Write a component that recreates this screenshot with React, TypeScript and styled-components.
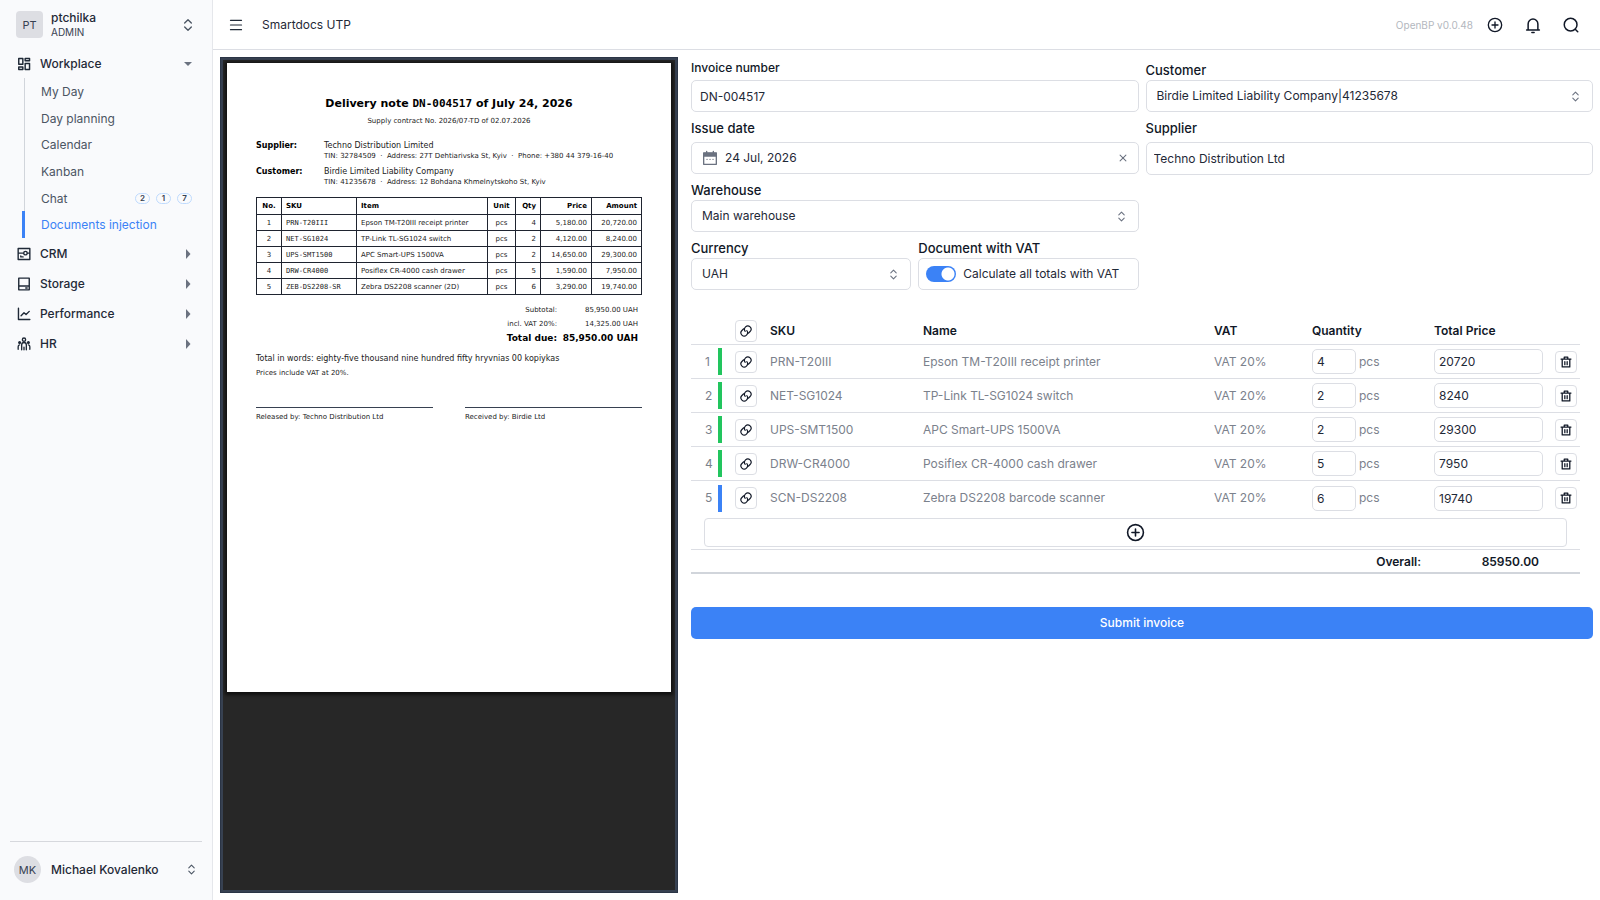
import React from "react";
import styled, { createGlobalStyle } from "styled-components";

const GlobalStyle = createGlobalStyle`
  *, *::before, *::after { box-sizing: border-box; }
  body { margin: 0; background: #fff; color: #1f2937; font-family: Inter, "Liberation Sans", sans-serif; font-size: 12px; line-height: 16px; }
  button, input, select { font: inherit; color: inherit; margin: 0; }
  button { background: none; border: 0; padding: 0; cursor: pointer; }
  ul { list-style: none; margin: 0; padding: 0; }
  a { color: inherit; text-decoration: none; }
  h1, p, dl, dd { margin: 0; }
`;

/* ---------- icons ---------- */

const Svg = styled.svg.attrs({ viewBox: "0 0 24 24", "aria-hidden": true })<{ $size: number; $stroke?: number }>`
  display: block;
  flex: none;
  width: ${(p) => p.$size}px;
  height: ${(p) => p.$size}px;
  fill: none;
  stroke: currentColor;
  stroke-width: ${(p) => p.$stroke ?? 2};
  stroke-linecap: round;
  stroke-linejoin: round;
`;

const SortIcon = ({ size = 13 }: { size?: number }) => (
  <Svg $size={size}><path d="m7 15 5 5 5-5M7 9l5-5 5 5" /></Svg>
);
const LinkIcon = () => (
  <Svg $size={14} $stroke={2}>
    <path d="M8 8.200 5 11.200a5.100 5.100 0 0 0 7.800 7.800c2.500-2.500 2.500-5.200.6-7.600" />
    <path d="m16 15.800 3-3a5.100 5.100 0 0 0-7.800-7.800c-2.500 2.500-2.500 5.200-.6 7.600" />
  </Svg>
);
const TrashIcon = () => (
  <Svg $size={14} $stroke={2.2}><path d="M3.500 7h17M10 11.500v5m4-5v5M9 7V3.500h6V7M5.500 7h13v13.500h-13V7Z" /></Svg>
);
const PlusCircleIcon = ({ size }: { size: number }) => (
  <Svg $size={size}><circle cx="12" cy="12" r="10" /><path d="M12 7.500v9M7.500 12h9" /></Svg>
);
const BellIcon = () => (
  <Svg $size={18}><path d="M3.500 18.500h17M5.500 18v-7.500a6.500 6.500 0 0 1 13 0V18M10.500 22h3" /></Svg>
);
const SearchIcon = () => (
  <Svg $size={18}><circle cx="11.500" cy="11.500" r="8.500" /><path d="m18 18 3 3" /></Svg>
);
const MenuIcon = () => (
  <Svg $size={14}><path d="M2.500 4h19M2.500 12h19M2.500 20h19" /></Svg>
);
const CloseIcon = () => (
  <Svg $size={10} $stroke={2.5}><path d="m5 5 14 14M19 5 5 19" /></Svg>
);
const CalendarIcon = () => (
  <Svg $size={16} $stroke={2}>
    <path d="M2.500 4.500h19v17h-19z" />
    <path d="M2.500 5h19v4h-19z" fill="currentColor" />
    <path d="M7 2v3M17 2v3M7.500 14h.1M12 14h.1M16.500 14h.1" />
  </Svg>
);
const WorkplaceIcon = () => (
  <Svg $size={14} $stroke={2.5}>
    <path d="M3 2.500h7v10H3zM14 2.500h7.500v4H14zM14 11h7.500v10.500H14zM3 17h7v4.500H3z" />
  </Svg>
);
const CrmIcon = () => (
  <Svg $size={14} $stroke={2.4}>
    <path d="M2 2.500h20v19H2zM2 10.500h9M18 10.500h4M6.500 15.500v1.500h4" /><circle cx="14.500" cy="10.500" r="3" />
  </Svg>
);
const StorageIcon = () => (
  <Svg $size={14} $stroke={2.4}>
    <path d="M3 2h18v20H3zM3 15.500h18M15 18.800h2.500" />
  </Svg>
);
const PerformanceIcon = () => (
  <Svg $size={14} $stroke={2.4}>
    <path d="M2.500 2v19.500H22M7 15l5-5 3.500 3L21 7.500" />
  </Svg>
);
const HrIcon = () => (
  <Svg $size={14} $stroke={2.3}>
    <circle cx="12" cy="4.500" r="2.800" />
    <circle cx="4.500" cy="9.500" r="1.500" fill="currentColor" />
    <circle cx="19.500" cy="9.500" r="1.500" fill="currentColor" />
    <path d="M8 22v-8.500a4 4 0 0 1 8 0V22M12 17.500v4.500M2 21v-4.500a3 3 0 0 1 2.500-3M22 21v-4.500a3 3 0 0 0-2.500-3" />
  </Svg>
);
const Caret = styled.svg.attrs({ viewBox: "0 0 8 10", "aria-hidden": true })<{ $open?: boolean }>`
  width: 8px;
  height: 10px;
  fill: #6b7280;
  transform: ${(p) => (p.$open ? "rotate(90deg)" : "none")};
`;

/* ---------- page shell ---------- */

const Shell = styled.div`
  display: flex;
  min-height: 100vh;
`;
const Sidebar = styled.nav`
  display: flex;
  flex-direction: column;
  flex: none;
  width: 213px;
  background: #f9fafc;
  border-right: 1px solid #e5e7eb;
`;
const AccountButton = styled.button`
  display: flex;
  align-items: center;
  gap: 8px;
  height: 48px;
  padding: 1px 16px 0;
  text-align: left;
  color: #4b5563;
`;
const Avatar = styled.span<{ $round?: boolean }>`
  display: grid;
  place-items: center;
  flex: none;
  width: 27px;
  height: 27px;
  border-radius: ${(p) => (p.$round ? "50%" : "4px")};
  background: #dddee3;
  font-size: 11px;
  color: #374151;
`;
const AccountText = styled.span`
  flex: 1;
  display: grid;
  font-size: 10px;
  line-height: 14px;
  color: #374151;
`;
const AccountName = styled.strong`
  flex: 1;
  font-size: 12px;
  font-weight: 500;
  color: #1f2937;
`;
const GroupButton = styled.button`
  display: flex;
  align-items: center;
  gap: 9px;
  width: 100%;
  height: 30px;
  padding: 1px 20px 0 17px;
  text-align: left;
  font-weight: 500;
  color: #1f2937;
`;
const Grow = styled.span`
  flex: 1;
`;
const SubList = styled.ul`
  display: flex;
  flex-direction: column;
  height: 160px;
  margin-left: 22px;
`;
const SubItem = styled.li`
  flex: 1;
  display: flex;
`;
const SubLink = styled.a<{ $active?: boolean }>`
  flex: 1;
  display: flex;
  align-items: center;
  justify-content: space-between;
  margin-left: ${(p) => (p.$active ? 0 : 2)}px;
  padding: 1px 20px 0 16px;
  border-left: ${(p) => (p.$active ? "3px solid #3b82f6" : "1px solid #d1d5db")};
  color: ${(p) => (p.$active ? "#3b82f6" : "#4b5563")};
`;
const Badges = styled.span`
  display: flex;
  gap: 6px;
`;
const Badge = styled.span`
  min-width: 15px;
  height: 11px;
  border: 1px solid #bfdbfe;
  border-radius: 6px;
  text-align: center;
  font-size: 8px;
  line-height: 9px;
  font-weight: 600;
  color: #374151;
`;
const UserArea = styled.div`
  margin: auto 10px 0;
  padding: 14px 0 17px;
  border-top: 1px solid #d6d8dd;
`;
const UserButton = styled.button`
  display: flex;
  align-items: center;
  gap: 10px;
  width: 100%;
  padding: 0 4px;
  text-align: left;
  color: #4b5563;
`;
const Main = styled.main`
  flex: 1;
  min-width: 0;
  display: flex;
  flex-direction: column;
`;
const TopBar = styled.header`
  display: flex;
  align-items: center;
  height: 50px;
  padding: 0 20px 0 16px;
  border-bottom: 1px solid #dcdee4;
`;
const TopTitle = styled.h1`
  flex: 1;
  margin-left: 19px;
  font-size: 12px;
  font-weight: 400;
`;
const Version = styled.span`
  margin-right: 13px;
  font-size: 10px;
  color: #b3b7be;
`;
const TopActions = styled.div`
  display: flex;
  gap: 20px;
  color: #111827;
`;
const TopButton = styled.button`
  display: grid;
  place-items: center;
  width: 18px;
  height: 18px;
`;
const Content = styled.div`
  flex: 1;
  display: grid;
  grid-template-columns: minmax(0, 458fr) minmax(0, 902fr);
  gap: 13px;
  padding: 7px;
`;

/* ---------- document preview ---------- */

const Viewer = styled.section`
  padding: 3px 4px;
  background: #272727;
  border: 3px solid #374151;
  outline: 1px solid #2b3546;
  outline-offset: -1px;
`;
const Paper = styled.article`
  height: 629px;
  padding: 32px 29px;
  background: #fff;
  box-shadow: 0 1px 3px 2px #111;
  color: #222;
  font-family: "DejaVu Sans", sans-serif;
  font-size: 7px;
  line-height: 10px;
`;
const PaperTitle = styled.h2`
  margin: 0;
  text-align: center;
  font-size: 11px;
  line-height: 18px;
  color: #000;
`;
const Mono = styled.span`
  font-family: "DejaVu Sans Mono", monospace;
`;
const Contract = styled.p`
  margin: 3px 0 15px;
  text-align: center;
`;
const Party = styled.dl`
  display: grid;
  grid-template-columns: 68px 1fr;
  margin: 0 0 6px;
`;
const PartyTerm = styled.dt`
  font-size: 8px;
  font-weight: 700;
  color: #000;
`;
const PartyName = styled.p`
  font-size: 8px;
`;
const PaperTable = styled.table`
  width: 100%;
  margin-top: 10px;
  table-layout: fixed;
  border-collapse: collapse;
`;
type Align = "left" | "center" | "right";
const PaperTh = styled.th<{ $align?: Align; $w?: number }>`
  width: ${(p) => (p.$w ? `${p.$w}px` : "auto")};
  height: 17px;
  padding: 0 4px;
  border: 1px solid #1f2430;
  text-align: ${(p) => p.$align ?? "left"};
  color: #000;
`;
const PaperTd = styled.td<{ $align?: Align }>`
  height: 16px;
  padding: 0 4px;
  border: 1px solid #1f2430;
  text-align: ${(p) => p.$align ?? "left"};
`;
const Totals = styled.dl`
  display: grid;
  grid-template-columns: 1fr 81px;
  margin: 8px 4px 7px 0;
  line-height: 14px;
  text-align: right;
`;
const TotalCell = styled.div<{ $strong?: boolean }>`
  font-size: ${(p) => (p.$strong ? 9 : 7)}px;
  font-weight: ${(p) => (p.$strong ? 700 : 400)};
  color: ${(p) => (p.$strong ? "#000" : "inherit")};
`;
const Note = styled.p<{ $large?: boolean }>`
  font-size: ${(p) => (p.$large ? 8 : 7)}px;
  line-height: 14px;
`;
const Signatures = styled.div`
  display: grid;
  grid-template-columns: 1fr 1fr;
  gap: 32px;
  margin-top: 27px;
`;
const Signature = styled.p`
  padding-top: 4px;
  border-top: 1px solid #374151;
`;

/* ---------- invoice form ---------- */

const Form = styled.form`
  min-width: 0;
`;
const Fields = styled.div`
  display: grid;
  grid-template-columns: 1fr 1fr;
  gap: 0 7px;
`;
const Column = styled.div`
  min-width: 0;
`;
const Split = styled.div`
  display: grid;
  grid-template-columns: 1fr 1fr;
  gap: 7px;
`;
const Field = styled.div<{ $top: number; $gap: number }>`
  padding-top: ${(p) => p.$top}px;
  > label:first-child, > span:first-child {
    display: block;
    margin-bottom: ${(p) => p.$gap}px;
  }
`;
const Label = styled.label<{ $small?: boolean }>`
  font-size: ${(p) => (p.$small ? 12 : 13)}px;
  line-height: 18px;
  font-weight: 500;
  color: #111827;
`;
const Control = styled.div<{ $pad?: number }>`
  display: flex;
  align-items: center;
  gap: 7px;
  height: 32px;
  padding: 0 ${(p) => p.$pad ?? 10}px;
  border: 1px solid #dcdee4;
  border-radius: 5px;
  color: #6b7280;
`;
const TextInput = styled.input<{ $h?: number; $pad?: number }>`
  display: block;
  width: 100%;
  height: ${(p) => p.$h ?? 32}px;
  padding: 0 ${(p) => p.$pad ?? 8}px;
  border: 1px solid #dcdee4;
  border-radius: 5px;
  background: #fff;
  color: #1f2937;
`;
const BareInput = styled.input`
  flex: 1;
  min-width: 0;
  padding: 0;
  border: 0;
  background: none;
  color: #1f2937;
`;
const SelectWrap = styled.div`
  display: grid;
  align-items: center;
  color: #6b7280;
  > * { grid-area: 1 / 1; }
  > svg { justify-self: end; margin-right: 11px; pointer-events: none; }
`;
const Select = styled.select`
  appearance: none;
  width: 100%;
  height: 32px;
  padding: 0 30px 0 10px;
  border: 1px solid #dcdee4;
  border-radius: 5px;
  background: #fff;
  color: #1f2937;
`;
const Toggle = styled.input.attrs({ type: "checkbox" })`
  appearance: none;
  flex: none;
  width: 30px;
  height: 16px;
  border-radius: 8px;
  background: radial-gradient(circle at 22px 8px, #fff 6px, #3b82f6 7px);
`;
const ToggleLabel = styled.label`
  color: #1f2937;
`;

/* ---------- lines table ---------- */

const Lines = styled.table`
  width: calc(100% - 13px);
  margin-top: 22px;
  table-layout: fixed;
  border-collapse: separate;
  border-spacing: 0;
`;
const Th = styled.th<{ $w?: number }>`
  width: ${(p) => (p.$w ? `${p.$w}px` : "auto")};
  height: 33px;
  padding: 6px 0 0;
  border-bottom: 1px solid #dcdee4;
  text-align: left;
  font-weight: 600;
  color: #111827;
`;
const LineRow = styled.tr`
  &:not(:last-child) > td { border-bottom: 1px solid #dcdee4; }
`;
const Td = styled.td`
  height: 34px;
  padding: 0;
  color: #7b818c;
`;
const IndexCell = styled.div<{ $tone: string }>`
  display: flex;
  align-items: center;
  height: 27px;
  width: 31px;
  padding-left: 14px;
  border-right: 4px solid ${(p) => p.$tone};
`;
const IconButton = styled.button`
  display: grid;
  place-items: center;
  width: 22px;
  height: 22px;
  border: 1px solid #dcdee4;
  border-radius: 4px;
  color: #111827;
`;
const Quantity = styled.div`
  display: grid;
  grid-template-columns: 44px 1fr;
  align-items: center;
  gap: 3px;
`;
const PriceBox = styled.div`
  width: 109px;
`;
const AddButton = styled.button`
  display: grid;
  place-items: center;
  width: calc(100% - 26px);
  height: 29px;
  margin: 0 13px;
  border: 1px solid #dcdee4;
  border-radius: 4px;
  color: #111827;
`;
const OverallCell = styled.td<{ $pad?: number }>`
  height: 25px;
  padding: 1px ${(p) => p.$pad ?? 0}px 0 0;
  border-top: 1px solid #dcdee4;
  border-bottom: 2px solid #d1d5db;
  text-align: right;
  font-weight: 600;
  color: #111827;
`;
const SubmitButton = styled.button`
  width: 100%;
  height: 32px;
  margin-top: 33px;
  border-radius: 5px;
  background: #3b82f6;
  color: #fff;
  font-weight: 500;
`;

/* ---------- data ---------- */

const subItems = ["My Day", "Day planning", "Calendar", "Kanban", "Chat", "Documents injection"];
const groups = [
  { name: "CRM", icon: <CrmIcon /> },
  { name: "Storage", icon: <StorageIcon /> },
  { name: "Performance", icon: <PerformanceIcon /> },
  { name: "HR", icon: <HrIcon /> },
];
const paperRows = [
  ["1", "PRN-T20III", "Epson TM-T20III receipt printer", "pcs", "4", "5,180.00", "20,720.00"],
  ["2", "NET-SG1024", "TP-Link TL-SG1024 switch", "pcs", "2", "4,120.00", "8,240.00"],
  ["3", "UPS-SMT1500", "APC Smart-UPS 1500VA", "pcs", "2", "14,650.00", "29,300.00"],
  ["4", "DRW-CR4000", "Posiflex CR-4000 cash drawer", "pcs", "5", "1,590.00", "7,950.00"],
  ["5", "ZEB-DS2208-SR", "Zebra DS2208 scanner (2D)", "pcs", "6", "3,290.00", "19,740.00"],
];
const paperCols: { name: string; w?: number; align: Align }[] = [
  { name: "No.", w: 25, align: "center" },
  { name: "SKU", w: 75, align: "left" },
  { name: "Item", align: "left" },
  { name: "Unit", w: 28, align: "center" },
  { name: "Qty", w: 25, align: "right" },
  { name: "Price", w: 51, align: "right" },
  { name: "Amount", w: 50, align: "right" },
];
const green = "#22c55e";
const blue = "#3b82f6";
const lines = [
  { sku: "PRN-T20III", name: "Epson TM-T20III receipt printer", qty: 4, total: 20720, tone: green },
  { sku: "NET-SG1024", name: "TP-Link TL-SG1024 switch", qty: 2, total: 8240, tone: green },
  { sku: "UPS-SMT1500", name: "APC Smart-UPS 1500VA", qty: 2, total: 29300, tone: green },
  { sku: "DRW-CR4000", name: "Posiflex CR-4000 cash drawer", qty: 5, total: 7950, tone: green },
  { sku: "SCN-DS2208", name: "Zebra DS2208 barcode scanner", qty: 6, total: 19740, tone: blue },
];

const DeliveryNote = () => (
  <Paper>
    <PaperTitle>Delivery note <Mono>DN-004517</Mono> of July 24, 2026</PaperTitle>
    <Contract>Supply contract No. 2026/07-TD of 02.07.2026</Contract>
    <Party>
      <PartyTerm>Supplier:</PartyTerm>
      <dd>
        <PartyName>Techno Distribution Limited</PartyName>
        <p>TIN: 32784509 &nbsp;·&nbsp; Address: 27T Dehtiarivska St, Kyiv &nbsp;·&nbsp; Phone: +380 44 379-16-40</p>
      </dd>
    </Party>
    <Party>
      <PartyTerm>Customer:</PartyTerm>
      <dd>
        <PartyName>Birdie Limited Liability Company</PartyName>
        <p>TIN: 41235678 &nbsp;·&nbsp; Address: 12 Bohdana Khmelnytskoho St, Kyiv</p>
      </dd>
    </Party>
    <PaperTable>
      <thead>
        <tr>{paperCols.map((c) => <PaperTh key={c.name} $w={c.w} $align={c.align}>{c.name}</PaperTh>)}</tr>
      </thead>
      <tbody>
        {paperRows.map((row) => (
          <tr key={row[0]}>
            {row.map((cell, i) => (
              <PaperTd key={i} $align={paperCols[i].align}>{i === 1 ? <Mono>{cell}</Mono> : cell}</PaperTd>
            ))}
          </tr>
        ))}
      </tbody>
    </PaperTable>
    <Totals>
      <TotalCell as="dt">Subtotal:</TotalCell><TotalCell as="dd">85,950.00 UAH</TotalCell>
      <TotalCell as="dt">incl. VAT 20%:</TotalCell><TotalCell as="dd">14,325.00 UAH</TotalCell>
      <TotalCell as="dt" $strong>Total due:</TotalCell><TotalCell as="dd" $strong>85,950.00 UAH</TotalCell>
    </Totals>
    <Note $large>Total in words: eighty-five thousand nine hundred fifty hryvnias 00 kopiykas</Note>
    <Note>Prices include VAT at 20%.</Note>
    <Signatures>
      <Signature>Released by: Techno Distribution Ltd</Signature>
      <Signature>Received by: Birdie Ltd</Signature>
    </Signatures>
  </Paper>
);

const SelectField = ({ id, value }: { id: string; value: string }) => (
  <SelectWrap>
    <Select id={id} defaultValue={value}><option>{value}</option></Select>
    <SortIcon />
  </SelectWrap>
);

export default function App() {
  return (
    <Shell>
      <GlobalStyle />
      <Sidebar>
        <AccountButton type="button">
          <Avatar>PT</Avatar>
          <AccountText><AccountName>ptchilka</AccountName>ADMIN</AccountText>
          <SortIcon size={16} />
        </AccountButton>
        <GroupButton type="button" aria-expanded="true">
          <WorkplaceIcon />Workplace<Grow /><Caret $open><path d="M2 1v8l4-4z" /></Caret>
        </GroupButton>
        <SubList>
          {subItems.map((name) => (
            <SubItem key={name}>
              <SubLink href="#" $active={name === "Documents injection"}>
                {name}
                {name === "Chat" && <Badges><Badge>2</Badge><Badge>1</Badge><Badge>7</Badge></Badges>}
              </SubLink>
            </SubItem>
          ))}
        </SubList>
        {groups.map((g) => (
          <GroupButton type="button" key={g.name} aria-expanded="false">
            {g.icon}{g.name}<Grow /><Caret><path d="M2 0v10l4.500-5z" /></Caret>
          </GroupButton>
        ))}
        <UserArea>
          <UserButton type="button">
            <Avatar $round>MK</Avatar>
            <AccountName>Michael Kovalenko</AccountName>
            <SortIcon />
          </UserButton>
        </UserArea>
      </Sidebar>
      <Main>
        <TopBar>
          <button type="button" aria-label="Toggle menu"><MenuIcon /></button>
          <TopTitle>Smartdocs UTP</TopTitle>
          <Version>OpenBP v0.0.48</Version>
          <TopActions>
            <TopButton type="button" aria-label="Create"><PlusCircleIcon size={16} /></TopButton>
            <TopButton type="button" aria-label="Notifications"><BellIcon /></TopButton>
            <TopButton type="button" aria-label="Search"><SearchIcon /></TopButton>
          </TopActions>
        </TopBar>
        <Content>
          <Viewer aria-label="Document preview"><DeliveryNote /></Viewer>
          <Form onSubmit={(e) => e.preventDefault()}>
            <Fields>
              <Column>
                <Field $top={2} $gap={3}>
                  <Label $small htmlFor="number">Invoice number</Label>
                  <TextInput id="number" defaultValue="DN-004517" />
                </Field>
                <Field $top={7} $gap={5}>
                  <Label htmlFor="date">Issue date</Label>
                  <Control>
                    <CalendarIcon />
                    <BareInput id="date" defaultValue="24 Jul, 2026" />
                    <button type="button" aria-label="Clear date"><CloseIcon /></button>
                  </Control>
                </Field>
                <Field $top={7} $gap={1}>
                  <Label htmlFor="warehouse">Warehouse</Label>
                  <SelectField id="warehouse" value="Main warehouse" />
                </Field>
                <Split>
                  <Field $top={7} $gap={1}>
                    <Label htmlFor="currency">Currency</Label>
                    <SelectField id="currency" value="UAH" />
                  </Field>
                  <Field $top={7} $gap={1}>
                    <Label as="span">Document with VAT</Label>
                    <Control $pad={7}>
                      <Toggle id="vat" role="switch" defaultChecked />
                      <ToggleLabel htmlFor="vat">Calculate all totals with VAT</ToggleLabel>
                    </Control>
                  </Field>
                </Split>
              </Column>
              <Column>
                <Field $top={4} $gap={1}>
                  <Label htmlFor="customer">Customer</Label>
                  <SelectField id="customer" value="Birdie Limited Liability Company|41235678" />
                </Field>
                <Field $top={7} $gap={5}>
                  <Label htmlFor="supplier">Supplier</Label>
                  <TextInput id="supplier" $h={33} $pad={7} defaultValue="Techno Distribution Ltd" />
                </Field>
              </Column>
            </Fields>
            <Lines>
              <thead>
                <tr>
                  <Th $w={44} aria-label="Number" />
                  <Th $w={35}><IconButton type="button" aria-label="Link all"><LinkIcon /></IconButton></Th>
                  <Th $w={153}>SKU</Th>
                  <Th>Name</Th>
                  <Th $w={98}>VAT</Th>
                  <Th $w={122}>Quantity</Th>
                  <Th $w={121}>Total Price</Th>
                  <Th $w={25} aria-label="Delete" />
                </tr>
              </thead>
              <tbody>
                {lines.map((l, i) => (
                  <LineRow key={l.sku}>
                    <Td><IndexCell $tone={l.tone}>{i + 1}</IndexCell></Td>
                    <Td><IconButton type="button" aria-label={`Link ${l.sku}`}><LinkIcon /></IconButton></Td>
                    <Td>{l.sku}</Td>
                    <Td>{l.name}</Td>
                    <Td>VAT 20%</Td>
                    <Td>
                      <Quantity>
                        <TextInput aria-label={`Quantity of ${l.sku}`} $h={25} $pad={4} defaultValue={l.qty} />pcs
                      </Quantity>
                    </Td>
                    <Td>
                      <PriceBox><TextInput aria-label={`Total price of ${l.sku}`} $h={25} $pad={4} defaultValue={l.total} /></PriceBox>
                    </Td>
                    <Td><IconButton type="button" aria-label={`Delete ${l.sku}`}><TrashIcon /></IconButton></Td>
                  </LineRow>
                ))}
              </tbody>
              <tfoot>
                <tr>
                  <Td colSpan={8}><AddButton type="button" aria-label="Add line"><PlusCircleIcon size={19} /></AddButton></Td>
                </tr>
                <tr>
                  <OverallCell colSpan={6} $pad={13}>Overall:</OverallCell>
                  <OverallCell $pad={16}>85950.00</OverallCell>
                  <OverallCell />
                </tr>
              </tfoot>
            </Lines>
            <SubmitButton type="submit">Submit invoice</SubmitButton>
          </Form>
        </Content>
      </Main>
    </Shell>
  );
}
